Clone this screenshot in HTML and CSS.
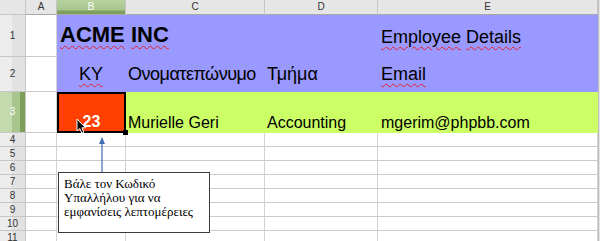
FILE: index.html
```html
<!DOCTYPE html>
<html lang="el">
<head>
  <meta charset="UTF-8" />
  <meta name="viewport" content="width=device-width, initial-scale=1" />
  <title>Employee Details - Sheet</title>
  <link rel="stylesheet" href="styles.css">
</head>
<body>

  <div class="sheet">
    <!-- column headers -->
    <div class="corner"></div>
    <div class="col-head">A</div>
    <div class="col-head active">B</div>
    <div class="col-head">C</div>
    <div class="col-head">D</div>
    <div class="col-head">E</div>
    <div class="edge"></div>

    <!-- row 1 -->
    <div class="row-head">1</div>
    <div class="cell"></div>
    <div class="cell blue r1 title span3"><span class="typo">ACME</span>&nbsp;<span class="typo">INC</span></div>
    <div class="cell blue r1 sub"><span class="typo">Employee</span>&nbsp;<span class="typo">Details</span></div>
    <div class="edge"></div>

    <!-- row 2 -->
    <div class="row-head">2</div>
    <div class="cell"></div>
    <div class="cell blue r2 center"><span class="typo">ΚΥ</span></div>
    <div class="cell blue r2 narrow">Ονοματεπώνυμο</div>
    <div class="cell blue r2">Τμήμα</div>
    <div class="cell blue r2 sub"><span class="typo">Email</span></div>
    <div class="edge"></div>

    <!-- row 3 -->
    <div class="row-head active">3</div>
    <div class="cell"></div>
    <div class="cell selected">23</div>
    <div class="cell green">Murielle Geri</div>
    <div class="cell green">Accounting</div>
    <div class="cell green sub-16">mgerim@phpbb.com</div>
    <div class="edge"></div>

    <!-- empty rows -->
    <div class="row-head">4</div><div class="cell"></div><div class="cell"></div><div class="cell"></div><div class="cell"></div><div class="cell"></div><div class="edge"></div>
    <div class="row-head">5</div><div class="cell"></div><div class="cell"></div><div class="cell"></div><div class="cell"></div><div class="cell"></div><div class="edge"></div>
    <div class="row-head">6</div><div class="cell"></div><div class="cell"></div><div class="cell"></div><div class="cell"></div><div class="cell"></div><div class="edge"></div>
    <div class="row-head">7</div><div class="cell"></div><div class="cell"></div><div class="cell"></div><div class="cell"></div><div class="cell"></div><div class="edge"></div>
    <div class="row-head">8</div><div class="cell"></div><div class="cell"></div><div class="cell"></div><div class="cell"></div><div class="cell"></div><div class="edge"></div>
    <div class="row-head">9</div><div class="cell"></div><div class="cell"></div><div class="cell"></div><div class="cell"></div><div class="cell"></div><div class="edge"></div>
    <div class="row-head">10</div><div class="cell"></div><div class="cell"></div><div class="cell"></div><div class="cell"></div><div class="cell"></div><div class="edge"></div>
    <div class="row-head">11</div><div class="cell"></div><div class="cell"></div><div class="cell"></div><div class="cell"></div><div class="cell"></div><div class="edge"></div>

    <!-- overlays -->
    <div class="fill-handle"></div>

    <svg class="pointer" width="12" height="17" viewBox="0 0 12 17">
      <path d="M1 1 L1 13 L3.8 10.6 L5.8 15.2 L7.8 14.3 L5.9 9.8 L9.6 9.8 Z" fill="#000" stroke="#fff" stroke-width="1" stroke-linejoin="round"/>
    </svg>

    <svg class="arrow" width="10" height="36" viewBox="0 0 10 36">
      <line x1="5" y1="5" x2="5" y2="36" stroke="#3f6db0" stroke-width="1.2"/>
      <path d="M5 0 L8 7 L2 7 Z" fill="#3f6db0"/>
    </svg>

    <div class="note">
      Βάλε τον Κωδικό<br>
      Υπαλλήλου για να<br>
      εμφανίσεις λεπτομέρειες
    </div>
  </div>

</body>
</html>
```

FILE: styles.css
```css
body {
  margin: 0;
  background: #ffffff;
  overflow: hidden;
  font-family: "Liberation Sans", Arial, sans-serif;
}

/* Spreadsheet grid */
.sheet {
  position: relative;
  display: grid;
  grid-template-columns: 26px 31px 69px 139px 113px 220px 2px;
  grid-template-rows: 15px 42px 35px 41px repeat(8, 14px);
  width: 600px;
}

.corner,
.col-head,
.row-head {
  background: #e6e6e6;
  border-right: 1px solid #c6c6c6;
  border-bottom: 1px solid #c6c6c6;
  box-sizing: border-box;
  color: #333;
  font-size: 10px;
  line-height: 12px;
  display: flex;
  align-items: center;
  justify-content: center;
}

.col-head {
  border-bottom-color: #a9a9a9;
}

.col-head.active {
  background: linear-gradient(#b7d2a0 0, #a6c58b 10px, #7d9f5a 11px);
  color: #fff;
}

.row-head {
  background: linear-gradient(to right, #ececec 0 12px, #e2e2e2 12px);
}

.row-head.active {
  background: linear-gradient(to right, #c3daaf 0 12px, #a8c58d 12px 20px, #7d9f5a 20px);
  color: #fff;
}

.edge {
  background: #e4e4e4;
  border-left: 1px solid #bdbdbd;
}

.cell {
  box-sizing: border-box;
  border-right: 1px solid #d3d3d3;
  border-bottom: 1px solid #cbcbcb;
  display: flex;
  align-items: flex-end;
  padding: 0 2px;
  white-space: nowrap;
  font-size: 16px;
  color: #000;
}

.span3 {
  grid-column: span 3;
}

.blue {
  background: #9999ff;
  border-color: transparent;
}

.green {
  background: #ccff66;
  border-color: transparent;
}

.r1 {
  padding-bottom: 8px;
}

.r2 {
  font-size: 18px;
  padding-bottom: 6px;
}

.narrow {
  letter-spacing: -0.5px;
}

.title {
  font-size: 22px;
  font-weight: bold;
  padding-left: 3px;
}

.sub {
  font-size: 18px;
  padding-left: 3px;
}

.sub-16 {
  padding-left: 3px;
}

.center {
  justify-content: center;
}

.typo {
  text-decoration: underline wavy #e8202a;
  text-decoration-thickness: 1px;
  text-underline-offset: 3px;
}

.selected {
  background: #ff4000;
  border: 2px solid #000;
  justify-content: center;
  color: #fff;
  font-weight: bold;
}

/* Overlays */
.fill-handle {
  position: absolute;
  left: 123px;
  top: 130px;
  width: 5px;
  height: 5px;
  background: #000;
}

.pointer {
  position: absolute;
  left: 76px;
  top: 118px;
}

.arrow {
  position: absolute;
  left: 97px;
  top: 137px;
}

.note {
  position: absolute;
  left: 58px;
  top: 172px;
  width: 152px;
  height: 61px;
  box-sizing: border-box;
  border: 1px solid #3a3a3a;
  background: #fff;
  padding: 4px 0 0 5px;
  font-family: "Liberation Serif", "Times New Roman", serif;
  font-size: 13px;
  line-height: 14px;
  color: #000;
}
```
